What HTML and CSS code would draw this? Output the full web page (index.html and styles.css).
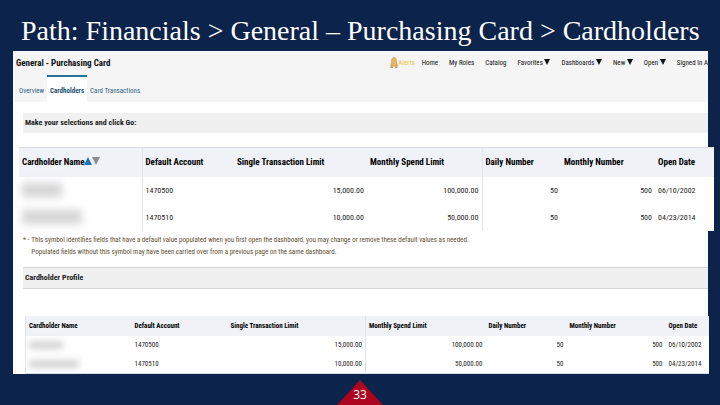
FILE: index.html
```
<!DOCTYPE html>
<html lang="en">
<head>
    <meta charset="UTF-8">
    <meta name="viewport" content="width=device-width, initial-scale=1.0">
    <title>Path: Financials &gt; General – Purchasing Card &gt; Cardholders</title>
    <link rel="stylesheet" href="styles.css">
</head>
<body>
    <h1 class="slide-title">Path: Financials &gt; General – Purchasing Card &gt; Cardholders</h1>

    <main class="dashboard">
        <header class="header">
            <div class="topbar">
                <h2 class="app-title">General - Purchasing Card</h2>
                <nav class="menu">
                    <a href="#" class="alerts">
                        <svg class="bell" viewBox="0 0 8 12" aria-hidden="true">
                            <path d="M4 0.5C2 0.5 1.6 2.5 1.6 5L0.6 9H7.4L6.4 5C6.4 2.5 6 0.5 4 0.5Z" fill="#e8b765" stroke="#c48a3c" stroke-width="0.6"/>
                            <path d="M0.5 9.2H3V11H0.5ZM5 9.2H7.5V11H5Z" fill="#c99a55"/>
                        </svg>Alerts</a>
                    <a href="#">Home</a>
                    <a href="#">My Roles</a>
                    <a href="#">Catalog</a>
                    <a href="#">Favorites <span class="caret"></span></a>
                    <a href="#">Dashboards <span class="caret"></span></a>
                    <a href="#">New <span class="caret"></span></a>
                    <a href="#">Open <span class="caret"></span></a>
                    <a href="#">Signed In A</a>
                </nav>
            </div>
            <nav class="tabs">
                <a href="#">Overview</a>
                <a href="#" class="active">Cardholders</a>
                <a href="#">Card Transactions</a>
            </nav>
        </header>

        <h3 class="section prompt">Make your selections and click Go:</h3>

        <table class="cards large">
            <colgroup>
                <col class="name"><col class="account"><col class="single"><col class="spend"><col class="daily"><col class="monthly"><col class="date">
            </colgroup>
            <thead>
                <tr>
                    <th>Cardholder Name<svg class="sort" viewBox="0 0 16 8" aria-hidden="true"><path d="M0 8L4 0L8 8Z" fill="#1b75bb"/><path d="M8 0H16L12 8Z" fill="#8c8c8c"/></svg></th>
                    <th>Default Account</th>
                    <th>Single Transaction Limit</th>
                    <th>Monthly Spend Limit</th>
                    <th>Daily Number</th>
                    <th>Monthly Number</th>
                    <th>Open Date</th>
                </tr>
            </thead>
            <tbody>
                <tr>
                    <td><span class="redacted"></span></td>
                    <td>1470500</td>
                    <td class="num">15,000.00</td>
                    <td class="num">100,000.00</td>
                    <td class="num">50</td>
                    <td class="num">500</td>
                    <td>06/10/2002</td>
                </tr>
                <tr>
                    <td><span class="redacted long"></span></td>
                    <td>1470510</td>
                    <td class="num">10,000.00</td>
                    <td class="num">50,000.00</td>
                    <td class="num">50</td>
                    <td class="num">500</td>
                    <td>04/23/2014</td>
                </tr>
            </tbody>
        </table>

        <div class="note">
            <span>* -</span>
            <p>This symbol identifies fields that have a default value populated when you first open the dashboard, you may change or remove these default values as needed.<br>
            Populated fields without this symbol may have been carried over from a previous page on the same dashboard.</p>
        </div>

        <h3 class="section profile">Cardholder Profile</h3>

        <table class="cards small">
            <colgroup>
                <col class="name"><col class="account"><col class="single"><col class="spend"><col class="daily"><col class="monthly"><col class="date">
            </colgroup>
            <thead>
                <tr>
                    <th>Cardholder Name</th>
                    <th>Default Account</th>
                    <th>Single Transaction Limit</th>
                    <th>Monthly Spend Limit</th>
                    <th>Daily Number</th>
                    <th>Monthly Number</th>
                    <th>Open Date</th>
                </tr>
            </thead>
            <tbody>
                <tr>
                    <td><span class="redacted"></span></td>
                    <td>1470500</td>
                    <td class="num">15,000.00</td>
                    <td class="num">100,000.00</td>
                    <td class="num">50</td>
                    <td class="num">500</td>
                    <td>06/10/2002</td>
                </tr>
                <tr>
                    <td><span class="redacted long"></span></td>
                    <td>1470510</td>
                    <td class="num">10,000.00</td>
                    <td class="num">50,000.00</td>
                    <td class="num">50</td>
                    <td class="num">500</td>
                    <td>04/23/2014</td>
                </tr>
            </tbody>
        </table>
    </main>

    <footer class="page-number"><span>33</span></footer>
</body>
</html>
```
FILE: styles.css
```
* {
    box-sizing: border-box;
}

body {
    margin: 0;
    min-height: 100vh;
    display: flex;
    flex-direction: column;
    background-color: #0c234b;
    color: #222;
    font-family: "Roboto Condensed", "Liberation Sans", Arial, sans-serif;
    font-size: 9px;
}

h1, h2, h3, p {
    margin: 0;
}

a {
    color: inherit;
    text-decoration: none;
}

.slide-title {
    padding: 13px 0 2px 21px;
    color: white;
    font-family: "Liberation Serif", "Times New Roman", serif;
    font-size: 28px;
    font-weight: normal;
    line-height: 36px;
    white-space: nowrap;
}

.dashboard {
    margin: 0 12px 0 13px;
    background-color: white;
}

.header {
    background-color: #f5f5f5;
}

.topbar {
    display: flex;
    justify-content: space-between;
    height: 24px;
    line-height: 24px;
    white-space: nowrap;
}

.app-title {
    padding-left: 3px;
    color: #111;
    font-size: 9px;
}

.menu {
    display: flex;
    gap: 11px;
    color: #111;
    font-size: 7px;
}

.menu .alerts {
    color: #e8c53a;
    margin-right: -4px;
}

.bell {
    width: 8px;
    height: 12px;
    vertical-align: middle;
}

.caret {
    display: inline-block;
    border: 3px solid transparent;
    border-top: 6px solid #111;
    border-bottom: 0;
}

.tabs {
    display: flex;
    padding-left: 3px;
    color: #2f5f82;
    font-size: 7px;
    line-height: 32px;
}

.tabs a {
    height: 27px;
    padding: 0 3px;
}

.tabs .active {
    border-top: 2px solid #2a7296;
    background-color: white;
    color: #1c4f73;
    font-weight: bold;
    line-height: 28px;
}

.section {
    margin-left: 10px;
    padding-left: 2px;
    background-color: #f0f0f0;
    font-size: 8px;
    line-height: 20px;
}

.prompt {
    margin-top: 11px;
}

.profile {
    margin-top: 9px;
    border-top: 1px solid #d6d6d6;
    border-bottom: 1px solid #d6d6d6;
}

.cards {
    table-layout: fixed;
    border-collapse: collapse;
    background-color: white;
}

.cards th {
    padding: 0 3px;
    background-color: #f0f2f7;
    color: #000;
    text-align: left;
    white-space: nowrap;
}

.cards td {
    padding: 0 3px;
    white-space: nowrap;
}

.cards .num {
    text-align: right;
}

/* as wide as the panel, so the indent pushes it past the right edge */
.large {
    width: 100%;
    margin: 14px 0 0 6px;
    border-top: 1px solid #d9dce3;
    font-size: 8px;
}

.large th {
    height: 29px;
    font-size: 9px;
}

.large td {
    height: 27px;
}

.large th:first-child,
.large td:first-child,
.large th:nth-child(4),
.large td:nth-child(4) {
    border-right: 1px solid #dfe3ea;
}

.large .name { width: 123px; }
.large .account { width: 92px; }
.large .single { width: 133px; }
.large .spend { width: 115px; }
.large .daily { width: 79px; }
.large .monthly { width: 94px; }
.large .date { width: 59px; }

.sort {
    width: 16px;
    height: 8px;
}

.note {
    display: flex;
    gap: 2px;
    margin: 3px 0 0 10px;
    color: #5c5030;
    font-size: 7px;
    line-height: 12px;
    white-space: nowrap;
}

.small {
    width: calc(100% - 13px);
    margin: 27px 0 0 12px;
    border-left: 1px solid #e2e5ea;
    border-bottom: 1px solid #d3dfec;
    font-size: 7px;
}

.small th {
    height: 20px;
}

.small td {
    height: 19px;
}

.small th:nth-child(3),
.small td:nth-child(3) {
    border-right: 1px solid #dfe3ea;
}

.small .name { width: 106px; }
.small .account { width: 96px; }
.small .single { width: 138px; }
.small .spend { width: 120px; }
.small .daily { width: 81px; }
.small .monthly { width: 99px; }
.small .date { width: 43px; }

.redacted {
    display: block;
    width: 40px;
    height: 14px;
    background-color: #d4d4d4;
    filter: blur(4px);
}

.redacted.long {
    width: 60px;
}

.small .redacted {
    width: 34px;
    height: 8px;
    filter: blur(3px);
}

.small .redacted.long {
    width: 50px;
}

.page-number {
    display: flex;
    justify-content: center;
    margin-top: auto;
    color: white;
    font-family: "Open Sans", sans-serif;
    font-size: 12px;
    line-height: 20px;
}

.page-number span {
    width: 46px;
    height: 25px;
    padding-top: 5px;
    background-color: #ab0520;
    clip-path: polygon(50% 0, 100% 100%, 0 100%);
    text-align: center;
}
```
